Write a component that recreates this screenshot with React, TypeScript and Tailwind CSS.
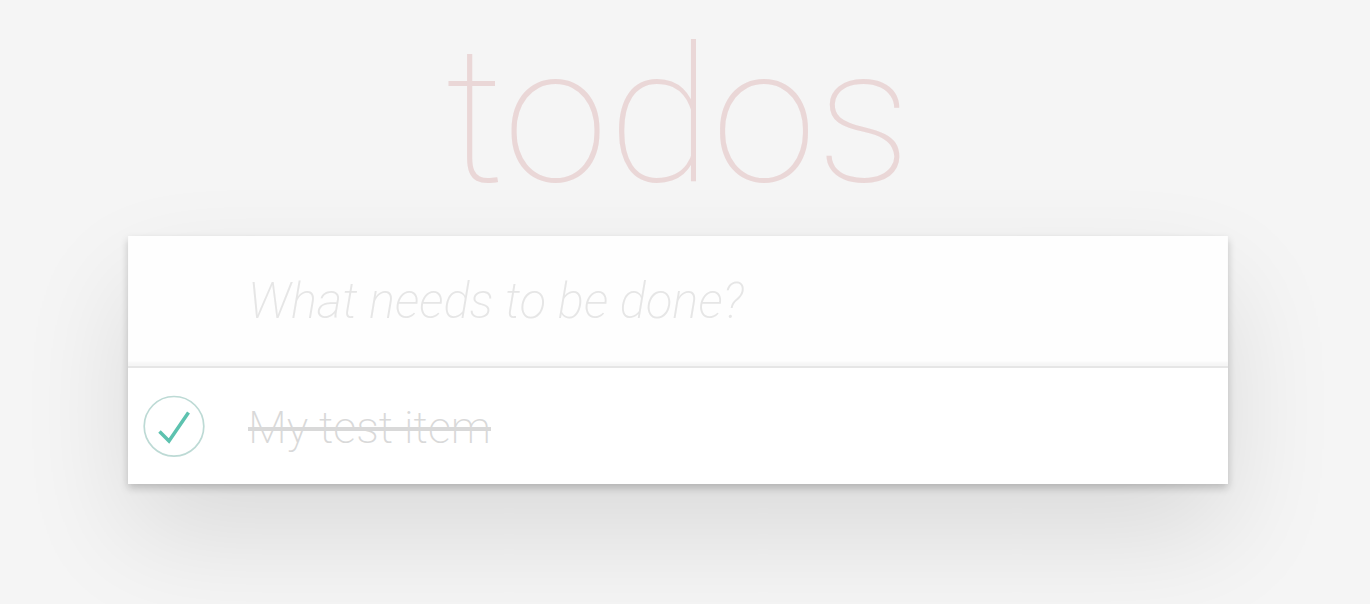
import React, { useState } from "react";

type Todo = { id: number; title: string; completed: boolean };

export default function App() {
  const [todos, setTodos] = useState<Todo[]>([{ id: 1, title: "My test item", completed: true }]);
  const [draft, setDraft] = useState("");

  const toggle = (id: number) =>
    setTodos((list) => list.map((t) => (t.id === id ? { ...t, completed: !t.completed } : t)));

  const add = (e: React.FormEvent) => {
    e.preventDefault();
    if (!draft.trim()) return;
    setTodos((list) => [...list, { id: Date.now(), title: draft.trim(), completed: false }]);
    setDraft("");
  };

  return (
    <div className="min-h-screen bg-[#f5f5f5] pr-[14px] font-['Roboto','Liberation_Sans',sans-serif] font-thin antialiased">
      <main className="mx-auto w-full max-w-[1100px]">
        <h1 className="pb-1 text-center text-[190px] leading-[232px] text-[#ead7d7]">todos</h1>
        <section className="bg-white shadow-[0_4px_8px_0_rgba(0,0,0,0.2),0_50px_112px_0_rgba(0,0,0,0.11)]">
          <form onSubmit={add}>
            <input
              aria-label="New todo"
              placeholder="What needs to be done?"
              value={draft}
              onChange={(e) => setDraft(e.target.value)}
              className="block h-[130px] w-full bg-[#fefefe] pl-[120px] pr-4 text-[49px] font-extralight text-[#4d4d4d] shadow-[inset_0_-4px_2px_0_rgba(0,0,0,0.03)] outline-none placeholder:italic placeholder:text-[#e6e6e6]"
            />
          </form>
          <ul className="border-t-2 border-[#e6e6e6]">
            {todos.map((t) => (
              <li key={t.id} className="flex h-[116px] items-center pl-[14px]">
                <label className="flex items-center gap-[42px]">
                  <input type="checkbox" checked={t.completed} onChange={() => toggle(t.id)} className="peer sr-only" />
                  <svg width="64" height="64" viewBox="0 0 64 64" fill="none" aria-hidden="true">
                    <circle cx="32" cy="32.3" r="29.8" stroke="#bddad5" strokeWidth="1.7" />
                    {t.completed && <path d="M17.500 37.500l9.500 9.500L46.500 18.500" stroke="#5dc2af" strokeWidth="3.500" />}
                  </svg>
                  <span className={t.completed ? "pt-1 text-[45px] font-extralight text-[#d9d9d9] line-through decoration-4" : "pt-1 text-[45px] font-extralight text-[#4d4d4d]"}>{t.title}</span>
                </label>
              </li>
            ))}
          </ul>
        </section>
      </main>
    </div>
  );
}
